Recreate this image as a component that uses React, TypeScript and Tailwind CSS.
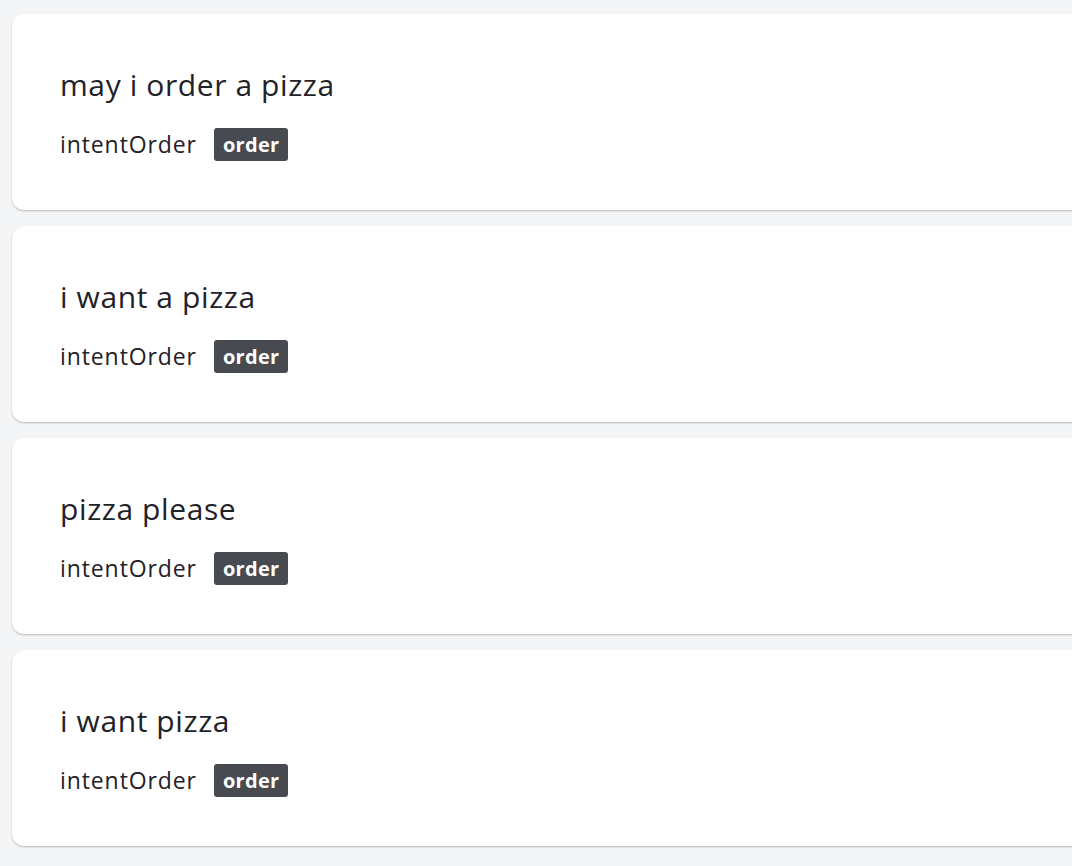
const items = ["may i order a pizza", "i want a pizza", "pizza please", "i want pizza"];

const UtteranceCard = ({ text }: { text: string }) => {
  return (
    <div className="h-[196px] w-[calc(100%+40px)] rounded-xl bg-white pl-12 pt-[50px] shadow-[0_1px_2px_rgba(0,0,0,0.25)]">
      <h2 className="text-[30px] leading-[42px] tracking-[0.6px] text-[#1f2227]">{text}</h2>
      <div className="mt-[22px] flex items-center">
        <span className="text-[23px] leading-[33px] tracking-[0.9px] text-[#1f2227]">intentOrder</span>
        <span className="ml-[17px] rounded-[3px] bg-[#474a4f] px-[9px] text-[20px] font-bold leading-[33px] tracking-[0.3px] text-white">
          order
        </span>
      </div>
    </div>
  );
};

export default function App() {
  return (
    <div
      className="min-h-[866px] overflow-hidden bg-[#f4f5f7] pl-3 pt-[14px]"
      style={{ fontFamily: "'Open Sans', 'Noto Sans', sans-serif" }}
    >
      <div className="flex flex-col gap-4">
        {items.map((t) => (
          <UtteranceCard key={t} text={t} />
        ))}
      </div>
    </div>
  );
}
